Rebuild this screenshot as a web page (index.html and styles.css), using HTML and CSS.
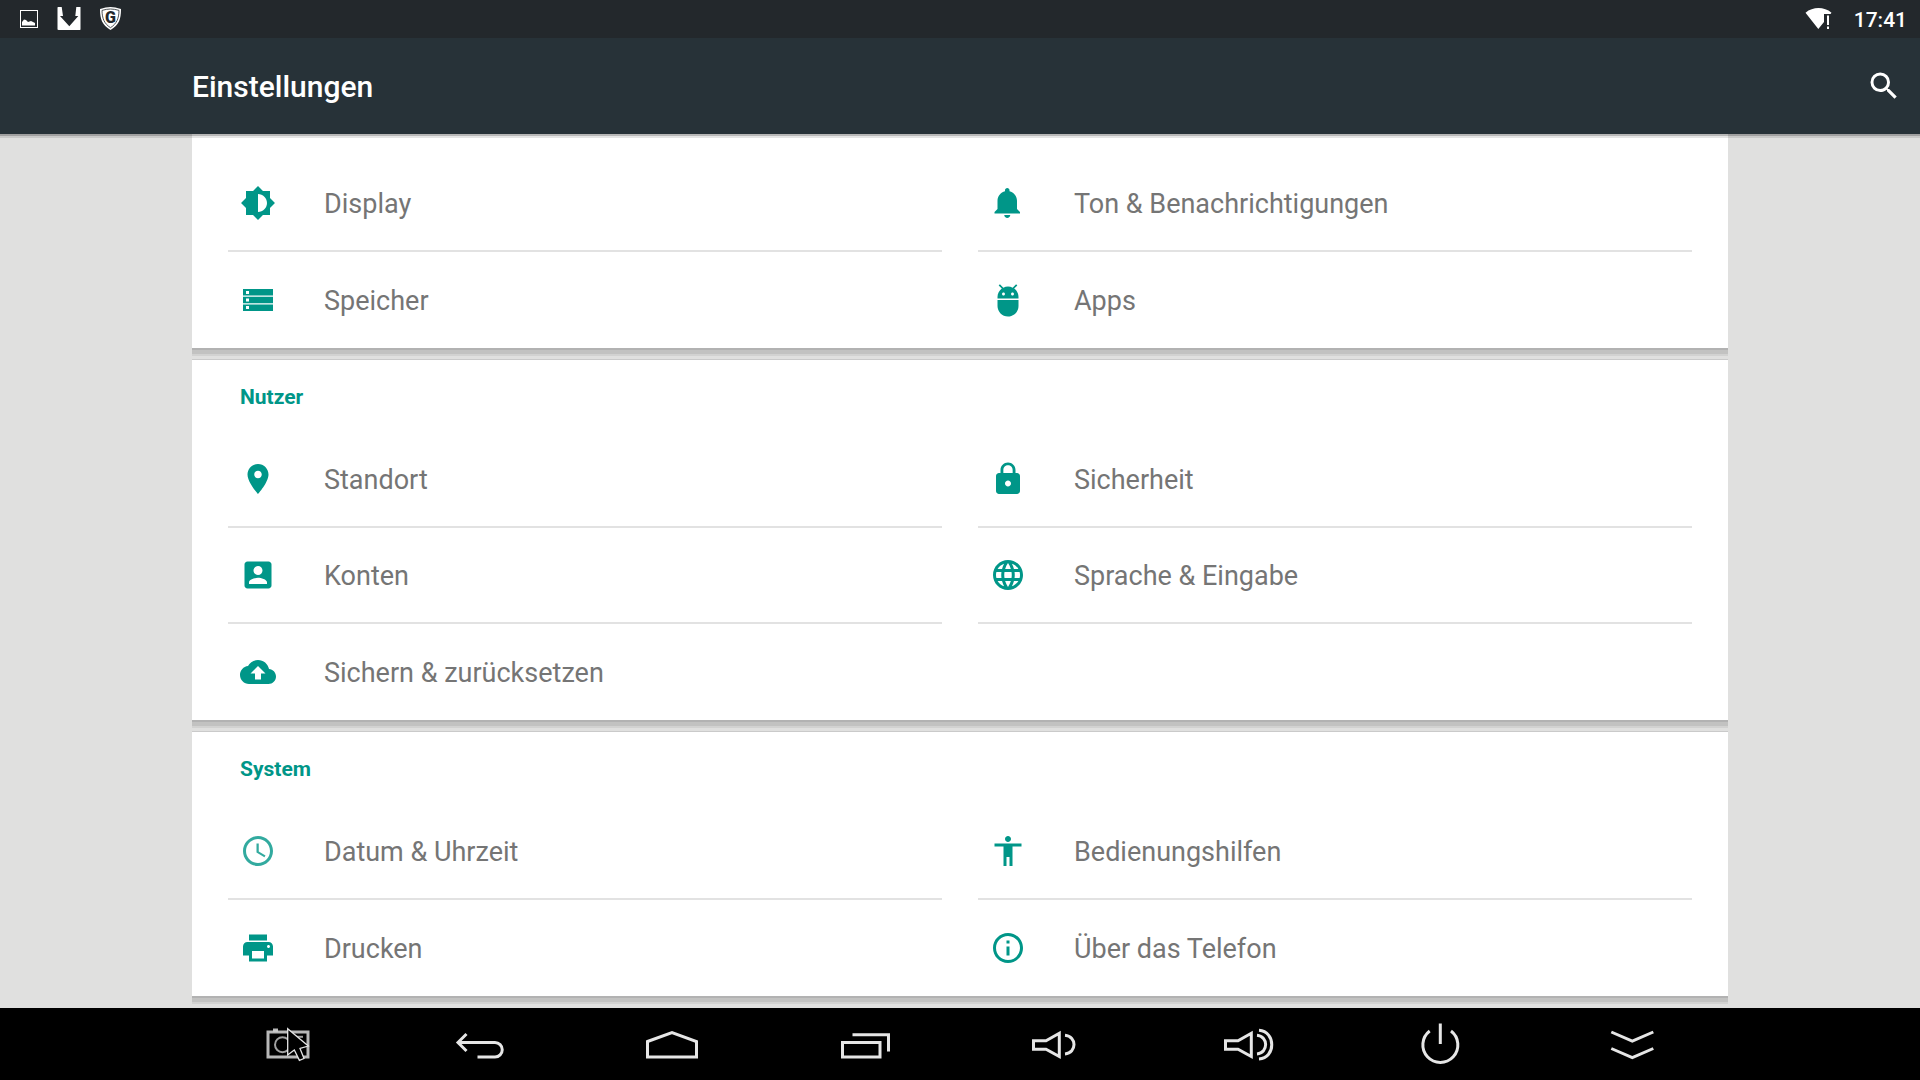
FILE: index.html
```html
<!DOCTYPE html>
<html lang="de">
<head>
    <meta charset="utf-8">
    <title>Einstellungen</title>
    <link rel="stylesheet" href="styles.css">
</head>
<body>
    <div class="statusbar">
        <div class="notifications">
            <svg width="18" height="18" viewBox="0 0 18 18"><rect x="0.5" y="0.5" width="17" height="17" fill="none" stroke="#fff"/><path d="M2 15.500v-3.500l2-2.500 2 .5 2 2 3-1 2 1 2 1v2.500z" fill="#fff"/></svg>
            <svg width="24" height="24" viewBox="0 0 24 24"><path d="M1 0h3.700L6 9H3l9.300 10.300L21.300 9h-3L19.300 0H23.500V22.500l-.5.5H1.500l-1-.5V.5z" fill="#fff"/></svg>
            <svg width="22" height="24" viewBox="0 0 22 24">
                <path d="M10.500 0C13.500 0 17 .7 21 2c0 10-2 16-10.500 21C2 18 0 12 0 2 4 .7 7.500 0 10.500 0z" fill="#fff"/>
                <path d="M10.500 2C13 2 16 2.500 19 3.400c-.2 8-2 13-8.500 17.300C4 16.400 2.200 11.400 2 3.400 5 2.500 8 2 10.500 2z" fill="none" stroke="#23282c" stroke-width="0.800"/>
                <text x="10.500" y="16" text-anchor="middle" class="shield-letter">G</text>
            </svg>
        </div>
        <div class="system">
            <svg width="27" height="22" viewBox="0 0 27 22"><path d="M.5 4.700C8 -1.500 19 -1.500 26.500 4.700L25.500 6H19v8l-5.700 7z" fill="#fff"/><path d="M22 7.500h2v9.500h-2zM22 18.500h2v2.500h-2z" fill="#fff"/></svg>
            <span class="clock">17:41</span>
        </div>
    </div>

    <header class="appbar">
        <h1>Einstellungen</h1>
        <button class="search" aria-label="Suchen">
            <svg class="icon" viewBox="0 0 24 24"><path d="M15.500 14h-.79l-.28-.27A6.470 6.470 0 0 0 16 9.500 6.500 6.500 0 1 0 9.500 16c1.610 0 3.090-.59 4.230-1.570l.27.28v.79l5 4.990L20.490 19l-4.990-5zm-6 0C7.010 14 5 11.990 5 9.500S7.010 5 9.500 5 14 7.010 14 9.500 11.990 14 9.500 14z"/></svg>
        </button>
    </header>

    <main>
        <section class="card card-cut">
            <div class="items">
                <a class="item" href="#display">
                    <svg class="icon" viewBox="0 0 24 24"><path d="M20 15.310L23.310 12 20 8.690V4h-4.690L12 .69 8.690 4H4v4.690L.69 12 4 15.310V20h4.690L12 23.310 15.310 20H20v-4.690zM12 18V6c3.310 0 6 2.690 6 6s-2.690 6-6 6z"/></svg>
                    <span>Display</span>
                </a>
                <a class="item" href="#ton">
                    <svg class="icon" viewBox="0 0 24 24"><path d="M11.500 22c1.100 0 2-.9 2-2h-4c0 1.100.9 2 2 2zm6.500-6v-5.500c0-3.070-2.130-5.640-5-6.320V3.500c0-.83-.67-1.500-1.500-1.500S10 2.670 10 3.500v.68c-2.870.68-5 3.250-5 6.320V16l-2 2v1h17v-1l-2-2z"/></svg>
                    <span>Ton &amp; Benachrichtigungen</span>
                </a>
                <a class="item" href="#speicher">
                    <svg class="icon" viewBox="0 0 36 36"><path d="M3 7h30v6.500H3zM6 9v3h3V9zM3 14.800h30v6.500H3zM6 16.500v3h3v-3zM3 22.500h30V29H3zM6 24v3h3v-3z" fill-rule="evenodd"/></svg>
                    <span>Speicher</span>
                </a>
                <a class="item" href="#apps">
                    <svg class="icon" viewBox="0 0 24 24"><path d="M5 16c0 3.870 3.130 7 7 7s7-3.130 7-7v-4H5v4zM16.120 4.370l2.100-2.100-.82-.83-2.300 2.310C14.160 3.280 13.120 3 12 3s-2.160.28-3.090.75L6.600 1.440l-.82.83 2.100 2.100C6.140 5.640 5 7.680 5 10v1h14v-1c0-2.320-1.140-4.360-2.880-5.630zM9 9c-.55 0-1-.45-1-1s.45-1 1-1 1 .45 1 1-.45 1-1 1zm6 0c-.55 0-1-.45-1-1s.45-1 1-1 1 .45 1 1-.45 1-1 1z"/></svg>
                    <span>Apps</span>
                </a>
            </div>
        </section>

        <section class="card">
            <h2>Nutzer</h2>
            <div class="items">
                <a class="item" href="#standort">
                    <svg class="icon" viewBox="0 0 24 24"><path d="M12 2C8.130 2 5 5.130 5 9c0 5.250 7 13 7 13s7-7.750 7-13c0-3.870-3.130-7-7-7zm0 9.500c-1.380 0-2.500-1.120-2.500-2.500s1.120-2.500 2.500-2.500 2.500 1.120 2.500 2.500-1.120 2.500-2.500 2.500z"/></svg>
                    <span>Standort</span>
                </a>
                <a class="item" href="#sicherheit">
                    <svg class="icon" viewBox="0 0 24 24"><path d="M18 8h-1V6c0-2.760-2.240-5-5-5S7 3.240 7 6v2H6c-1.100 0-2 .9-2 2v10c0 1.100.9 2 2 2h12c1.100 0 2-.9 2-2V10c0-1.100-.9-2-2-2zm-6 9c-1.100 0-2-.9-2-2s.9-2 2-2 2 .9 2 2-.9 2-2 2zm3.100-9H8.900V6c0-1.710 1.390-3.100 3.100-3.100s3.100 1.390 3.100 3.100v2z"/></svg>
                    <span>Sicherheit</span>
                </a>
                <a class="item" href="#konten">
                    <svg class="icon" viewBox="0 0 24 24"><path d="M3 5v14c0 1.100.89 2 2 2h14c1.100 0 2-.9 2-2V5c0-1.100-.9-2-2-2H5c-1.110 0-2 .9-2 2zm12 4c0 1.660-1.340 3-3 3s-3-1.340-3-3 1.340-3 3-3 3 1.340 3 3zm-9 8c0-2 4-3.100 6-3.100s6 1.100 6 3.100v1H6v-1z"/></svg>
                    <span>Konten</span>
                </a>
                <a class="item" href="#sprache">
                    <svg class="icon" viewBox="0 0 24 24"><path d="M11.990 2C6.470 2 2 6.480 2 12s4.470 10 9.990 10C17.520 22 22 17.520 22 12S17.520 2 11.990 2zm6.930 6h-2.950c-.32-1.250-.78-2.450-1.380-3.560 1.840.63 3.370 1.910 4.330 3.560zM12 4.040c.83 1.200 1.480 2.530 1.910 3.960h-3.820c.43-1.430 1.080-2.760 1.910-3.960zM4.260 14C4.100 13.360 4 12.690 4 12s.1-1.360.26-2h3.380c-.08.66-.14 1.320-.14 2 0 .68.06 1.340.14 2H4.260zm.82 2h2.950c.32 1.250.78 2.450 1.380 3.560-1.840-.63-3.370-1.900-4.330-3.560zm2.950-8H5.080c.96-1.660 2.490-2.930 4.330-3.560C8.810 5.550 8.350 6.750 8.030 8zM12 19.960c-.83-1.200-1.480-2.530-1.910-3.960h3.820c-.43 1.430-1.080 2.760-1.910 3.960zM14.340 14H9.660c-.09-.66-.16-1.320-.16-2 0-.68.07-1.350.16-2h4.680c.09.65.16 1.320.16 2 0 .68-.07 1.340-.16 2zm.25 5.560c.6-1.110 1.060-2.310 1.380-3.560h2.950c-.96 1.650-2.490 2.930-4.330 3.560zM16.360 14c.08-.66.14-1.320.14-2 0-.68-.06-1.340-.14-2h3.380c.16.64.26 1.310.26 2s-.1 1.360-.26 2h-3.380z"/></svg>
                    <span>Sprache &amp; Eingabe</span>
                </a>
                <a class="item" href="#sichern">
                    <svg class="icon" viewBox="0 0 24 24"><path d="M19.350 10.040C18.670 6.590 15.640 4 12 4 9.110 4 6.600 5.640 5.350 8.040 2.340 8.360 0 10.910 0 14c0 3.310 2.690 6 6 6h13c2.760 0 5-2.240 5-5 0-2.640-2.050-4.780-4.650-4.960zM14 13v4h-4v-4H7l5-5 5 5h-3z"/></svg>
                    <span>Sichern &amp; zurücksetzen</span>
                </a>
            </div>
        </section>

        <section class="card">
            <h2>System</h2>
            <div class="items">
                <a class="item" href="#datum">
                    <svg class="icon icon-light" viewBox="0 0 24 24"><path d="M11.990 2C6.470 2 2 6.480 2 12s4.470 10 9.990 10C17.520 22 22 17.520 22 12S17.520 2 11.990 2zM12 20c-4.420 0-8-3.580-8-8s3.580-8 8-8 8 3.580 8 8-3.580 8-8 8z"/><path d="M12.500 7H11v6l5.250 3.150.75-1.230-4.500-2.670z"/></svg>
                    <span>Datum &amp; Uhrzeit</span>
                </a>
                <a class="item" href="#bedienungshilfen">
                    <svg class="icon" viewBox="0 0 24 24"><path d="M12 2c1.100 0 2 .9 2 2s-.9 2-2 2-2-.9-2-2 .9-2 2-2zm9 7h-6v13h-2v-6h-2v6H9V9H3V7h18v2z"/></svg>
                    <span>Bedienungshilfen</span>
                </a>
                <a class="item" href="#drucken">
                    <svg class="icon" viewBox="0 0 24 24"><path d="M19 8H5c-1.660 0-3 1.340-3 3v6h4v4h12v-4h4v-6c0-1.660-1.340-3-3-3zm-3 11H8v-5h8v5zm3-7c-.55 0-1-.45-1-1s.45-1 1-1 1 .45 1 1-.45 1-1 1zm-1-9H6v4h12V3z"/></svg>
                    <span>Drucken</span>
                </a>
                <a class="item" href="#telefon">
                    <svg class="icon" viewBox="0 0 24 24"><path d="M11 17h2v-6h-2v6zm1-15C6.480 2 2 6.480 2 12s4.480 10 10 10 10-4.480 10-10S17.520 2 12 2zm0 18c-4.410 0-8-3.590-8-8s3.590-8 8-8 8 3.590 8 8-3.590 8-8 8zM11 9h2V7h-2v2z"/></svg>
                    <span>Über das Telefon</span>
                </a>
            </div>
        </section>
    </main>

    <nav class="navbar">
        <button aria-label="Screenshot">
            <svg viewBox="0 0 60 60">
                <rect x="10" y="18" width="40" height="25" opacity="0.800"/>
                <path d="M15 16h5" opacity="0.800"/>
                <circle cx="24.500" cy="30.700" r="7.500" stroke-width="2" opacity="0.700"/>
                <path d="M38 22.800h7" stroke-width="2" opacity="0.700"/>
                <!-- mouse pointer -->
                <path d="M29.700 14.700L50.300 32 42 34.500l4 10-4.600 1.900L36.300 36l-6.600 5z" fill="#000" stroke-width="1.300"/>
            </svg>
        </button>
        <button aria-label="Zurück">
            <svg viewBox="0 0 60 60"><path d="M16.500 20L8 28.500l8.500 8.500M8 28.500h37a7.250 7.250 0 0 1 0 14.500H27.500"/></svg>
        </button>
        <button aria-label="Startseite">
            <svg viewBox="0 0 60 60"><path d="M5.500 27.500L30 18.500l24.500 9V43h-49z"/></svg>
        </button>
        <button aria-label="Letzte Apps">
            <svg viewBox="0 0 60 60"><path d="M8.500 28.500h37.500V43H8.500zM18.500 20.800h36V37.500"/></svg>
        </button>
        <button aria-label="Leiser">
            <svg viewBox="0 0 60 60"><path d="M7.500 26.700H20L33.300 19.300V42.500L20 35.300H7.500z"/><path d="M39 21.300c12 1 12 17.600 0 18.600"/></svg>
        </button>
        <button aria-label="Lauter">
            <svg viewBox="0 0 60 60"><path d="M7.500 26.700H20L33.300 19.300V42.500L20 35.300H7.500z"/><path d="M39 21.300c11.500 1 11.500 17.600 0 18.600M41 16.300c17 1 17 27.700 0 28.700"/></svg>
        </button>
        <button aria-label="Ausschalten">
            <svg viewBox="0 0 60 60"><path d="M19.700 17a17.500 17.500 0 1 0 21.300 0M30.300 9.500V30"/></svg>
        </button>
        <button aria-label="Leiste ausblenden">
            <svg viewBox="0 0 60 60"><path d="M9.300 18L30.300 27.200 51.300 18M9.300 34.500L30.300 43.700 51.300 34.500"/></svg>
        </button>
    </nav>
</body>
</html>
```

FILE: styles.css
```css
* {
    box-sizing: border-box;
}

body {
    margin: 0;
    min-height: 100vh;
    display: flex;
    flex-direction: column;
    font-family: Roboto, sans-serif;
    background-color: #e0e0df;
}

button {
    margin: 0;
    padding: 0;
    border: none;
    background: none;
    cursor: pointer;
}

svg {
    display: block;
}

.statusbar {
    height: 38px;
    padding: 0 13px 0 20px;
    display: flex;
    align-items: center;
    justify-content: space-between;
    background-color: #23282c;
    color: white;
}

.notifications {
    display: flex;
    align-items: center;
    gap: 19px;
}

.shield-letter {
    font-size: 16px;
    font-weight: 900;
    fill: #23282c;
}

.system {
    display: flex;
    align-items: center;
    gap: 22px;
}

.clock {
    padding-top: 2px;
    font-size: 21px;
    font-weight: 500;
}

.appbar {
    height: 96px;
    padding: 0 18px 0 10%;
    display: flex;
    align-items: center;
    justify-content: space-between;
    position: relative;
    background-color: #273238;
    color: white;
    box-shadow: 0 2px 0 rgba(0, 0, 0, 0.2), 0 4px 0 rgba(0, 0, 0, 0.1);
}

.appbar h1 {
    margin: 0;
    font-size: 30px;
    font-weight: 500;
}

.icon {
    width: 36px;
    height: 36px;
    fill: #009688;
    flex-shrink: 0;
}

.icon-light {
    opacity: 0.8;
}

.search .icon {
    fill: white;
}

main {
    flex: 1;
    padding: 0 10% 12px;
    display: flex;
    flex-direction: column;
    gap: 12px;
}

.card {
    padding: 0 36px;
    background-color: white;
    box-shadow: 0 -1px 0 #cacaca, 0 2px 0 #b2b2b2, 0 6px 0 #c2c2c1, 0 8px 0 #d2d2d1;
}

/* first card is scrolled under the app bar */
.card-cut {
    padding-top: 22px;
}

.card h2 {
    margin: 0;
    padding: 2px 12px 0;
    font-size: 21px;
    font-weight: 700;
    line-height: 70px;
    color: #009688;
}

.items {
    display: grid;
    grid-template-columns: 1fr 1fr;
    column-gap: 36px;
}

.item {
    height: 96px;
    padding: 0 12px;
    display: flex;
    align-items: center;
    gap: 48px;
    border-bottom: 2px solid #e2e2e2;
    font-size: 27px;
    color: #757575;
    text-decoration: none;
}

.item span {
    padding-top: 2px;
}

/* no divider in the bottom row of a card */
.item:last-child,
.item:nth-child(odd):nth-last-child(2) {
    border-bottom: none;
}

.navbar {
    height: 72px;
    padding: 0 10%;
    display: flex;
    background-color: black;
}

.navbar button {
    flex: 1;
    display: flex;
    align-items: center;
    justify-content: center;
}

.navbar svg {
    width: 60px;
    height: 60px;
    fill: none;
    stroke: #e6e6e6;
    stroke-width: 3;
}
```
